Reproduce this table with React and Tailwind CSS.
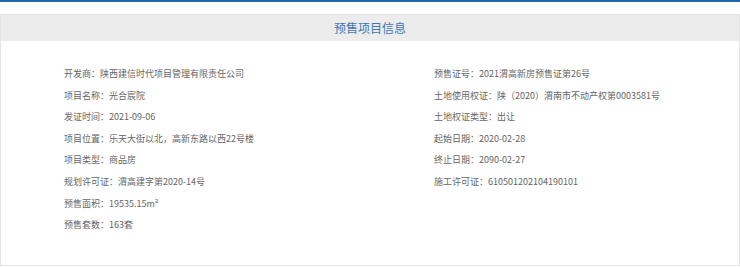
export default function App() {
  const left = [
    ["开发商：", "陕西建信时代项目管理有限责任公司"],
    ["项目名称：", "光合宸院"],
    ["发证时间：", "2021-09-06"],
    ["项目位置：", "乐天大街以北，高新东路以西22号楼"],
    ["项目类型：", "商品房"],
    ["规划许可证：", "渭高建字第2020-14号"],
    ["预售面积：", "19535.15m²"],
    ["预售套数：", "163套"],
  ];
  const right = [
    ["预售证号：", "2021渭高新房预售证第26号"],
    ["土地使用权证：", "陕（2020）渭南市不动产权第0003581号"],
    ["土地权证类型：", "出让"],
    ["起始日期：", "2020-02-28"],
    ["终止日期：", "2090-02-27"],
    ["施工许可证：", "610501202104190101"],
  ];
  const font = { fontFamily: '"Noto Sans CJK SC", "Noto Sans", sans-serif' };
  return (
    <div className="w-[740px] h-[267px] bg-white overflow-hidden" style={font}>
      <div className="h-[2px] bg-[#1d66a8]" />
      <div className="mt-[12px] h-[252px] border border-[#e4e4e4]">
        <div className="h-[26px] bg-[#ececec] flex items-center justify-center text-[12px] text-[#3d77b2]">
          预售项目信息
        </div>
        <div className="flex pl-[63px] pt-[22px] text-[9px] text-[#666] leading-[21.6px]">
          <div className="w-[370px] flex flex-col">
            {left.map(([k, v]) => (
              <div key={k} className="whitespace-nowrap">{k}{v}</div>
            ))}
          </div>
          <div className="flex flex-col">
            {right.map(([k, v]) => (
              <div key={k} className="whitespace-nowrap">{k}{v}</div>
            ))}
          </div>
        </div>
      </div>
    </div>
  );
}
